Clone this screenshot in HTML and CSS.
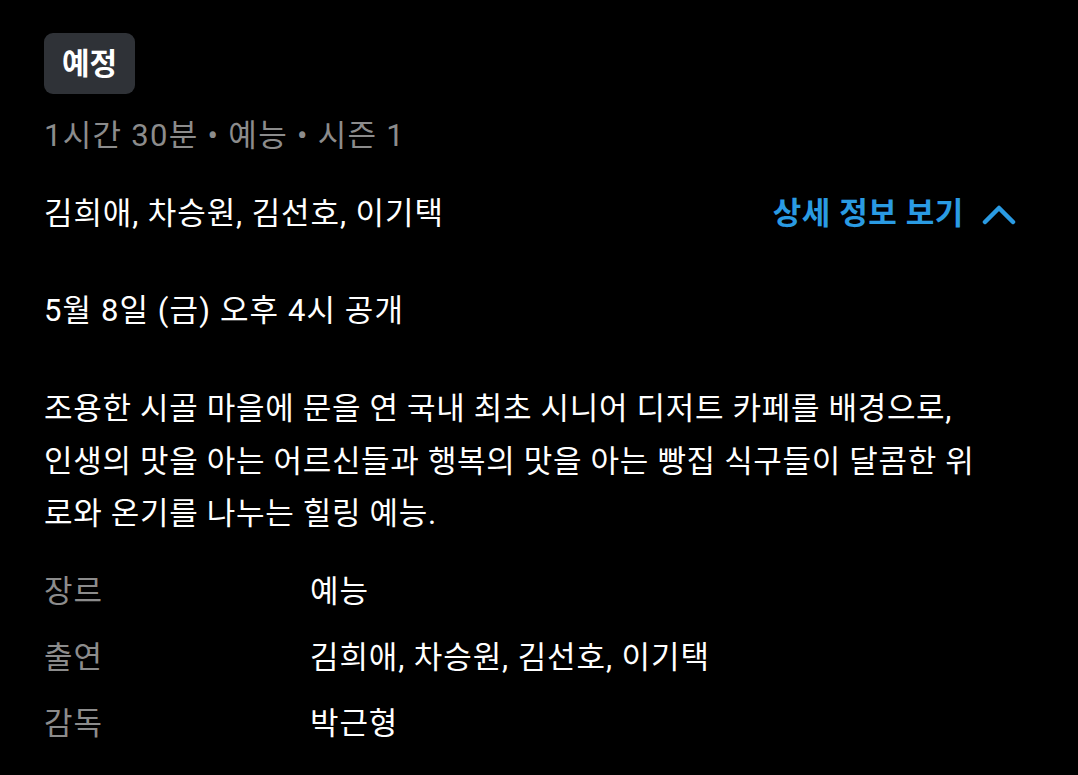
FILE: index.html
```html
<!DOCTYPE html>
<html lang="ko">
<head>
<meta charset="utf-8">
<link rel="stylesheet" href="styles.css">
</head>
<body>
<div class="page">
  <div class="badge">예정</div>
  <div class="meta">1시간 30분 • 예능 • 시즌 1</div>
  <div class="cast-row">
    <div class="cast">김희애, 차승원, 김선호, 이기택</div>
    <div class="more">상세 정보 보기
      <svg class="chev" width="34" height="22" viewBox="0 0 34 22"><path d="M3 19 L17 5 L31 19" fill="none" stroke="#2a9be3" stroke-width="4.5" stroke-linecap="round" stroke-linejoin="round"/></svg>
    </div>
  </div>
  <div class="date">5월 8일 (금) 오후 4시 공개</div>
  <p class="desc">조용한 시골 마을에 문을 연 국내 최초 시니어 디저트 카페를 배경으로,<br>인생의 맛을 아는 어르신들과 행복의 맛을 아는 빵집 식구들이 달콤한 위<br>로와 온기를 나누는 힐링 예능.</p>
  <div class="info">
    <div class="label">장르</div><div class="value">예능</div>
    <div class="label">출연</div><div class="value">김희애, 차승원, 김선호, 이기택</div>
    <div class="label">감독</div><div class="value">박근형</div>
  </div>
</div>
</body>
</html>
```
FILE: styles.css
```css
html, body {
  margin: 0;
  padding: 0;
  background: #000;
}
body {
  font-family: Roboto, "Noto Sans CJK KR", "Noto Sans", sans-serif;
  color: #fff;
  font-size: 31px;
  letter-spacing: 0.9px;
}
.page {
  padding: 33px 62px 0 44px;
}
.badge {
  display: inline-block;
  background: #2f3237;
  border-radius: 9px;
  padding: 0 18px;
  height: 61px;
  line-height: 61px;
  font-weight: 700;
  font-size: 30px;
  letter-spacing: 0;
}
.meta {
  color: #8c8c8c;
  margin-top: 22px;
  line-height: 40px;
  letter-spacing: 1.3px;
}
.cast-row {
  display: flex;
  justify-content: space-between;
  align-items: center;
  margin-top: 38px;
  line-height: 40px;
}
.more {
  color: #2a9be3;
  font-weight: 700;
  display: flex;
  align-items: center;
  gap: 18px;
  letter-spacing: 0.6px;
}
.chev { display: block; }
.date {
  margin-top: 57px;
  line-height: 40px;
  letter-spacing: 1.1px;
}
.desc {
  margin: 52px 0 0;
  line-height: 52.5px;
  letter-spacing: 0.68px;
}
.info {
  display: grid;
  grid-template-columns: 266px 1fr;
  row-gap: 26px;
  margin-top: 31px;
  line-height: 40px;
}
.label { color: #8c8c8c; }
```
